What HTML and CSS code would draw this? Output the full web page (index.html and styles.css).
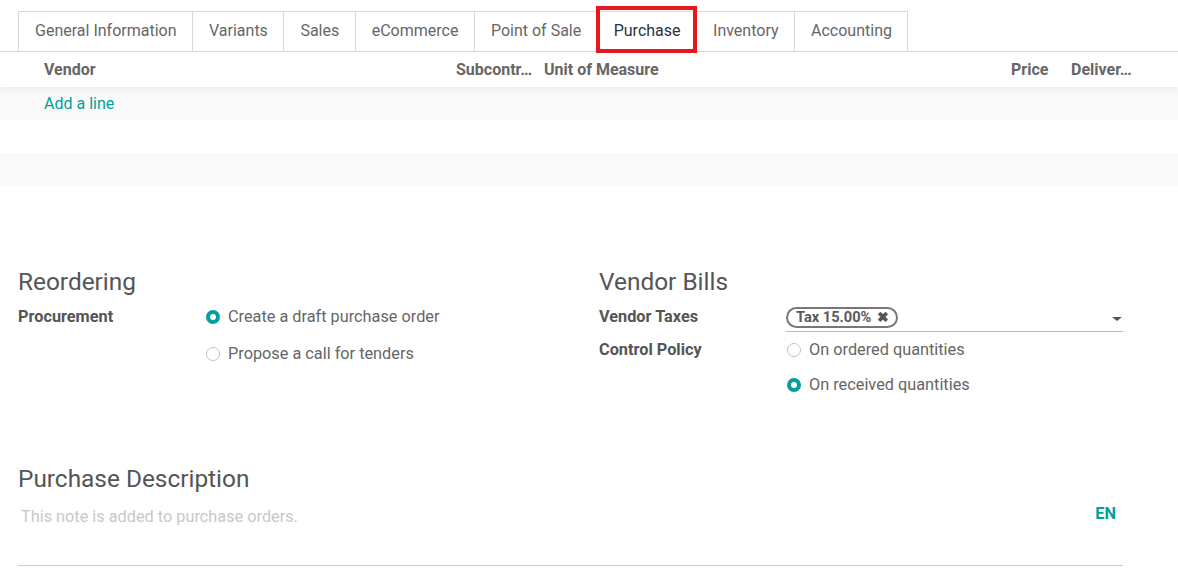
FILE: index.html
```html
<!DOCTYPE html>
<html lang="en">

<head>
  <meta charset="UTF-8" />
  <title>Product - Purchase</title>
  <link rel="stylesheet" href="styles.css">
</head>

<body>
  <!-- 标签页 -->
  <div class="tabs">
    <ul class="tab-list">
      <li>General Information</li>
      <li>Variants</li>
      <li>Sales</li>
      <li>eCommerce</li>
      <li>Point of Sale</li>
      <li class="active">Purchase<span class="mark"></span></li>
      <li>Inventory</li>
      <li>Accounting</li>
    </ul>
  </div>

  <!-- 供应商列表 -->
  <div class="vendor-table">
    <div class="row head">
      <span class="c-vendor">Vendor</span>
      <span class="c-sub">Subcontr&hellip;</span>
      <span class="c-uom">Unit of Measure</span>
      <span class="c-price">Price</span>
      <span class="c-deliv">Deliver&hellip;</span>
    </div>
    <div class="row odd"><a class="add-line">Add a line</a></div>
    <div class="row"></div>
    <div class="row odd"></div>
  </div>

  <div class="sheet">
    <div class="groups">
      <div class="group">
        <h2>Reordering</h2>
        <div class="field">
          <label>Procurement</label>
          <div class="radios">
            <div class="radio checked"><i></i>Create a draft purchase order</div>
            <div class="radio"><i></i>Propose a call for tenders</div>
          </div>
        </div>
      </div>
      <div class="group">
        <h2>Vendor Bills</h2>
        <div class="field taxes">
          <label>Vendor Taxes</label>
          <div class="many2many">
            <span class="tag">Tax 15.00% <b>&#10006;</b></span>
            <span class="caret"></span>
          </div>
        </div>
        <div class="field policy">
          <label>Control Policy</label>
          <div class="radios">
            <div class="radio"><i></i>On ordered quantities</div>
            <div class="radio checked"><i></i>On received quantities</div>
          </div>
        </div>
      </div>
    </div>

    <h2 class="desc-title">Purchase Description</h2>
    <div class="note">
      <span class="placeholder">This note is added to purchase orders.</span>
      <span class="lang">EN</span>
    </div>
  </div>
</body>

</html>
```

FILE: styles.css
```css
* {
  margin: 0;
  padding: 0;
  box-sizing: border-box;
}

ul {
  list-style: none;
}

body {
  font-family: Roboto, "Liberation Sans", sans-serif;
  font-size: 16px;
  color: #666;
  background: #fff;
}

/* 标签页 */
.tabs {
  padding: 11px 0 0 18px;
  border-bottom: 1px solid #d5d9de;
}

.tab-list {
  display: flex;
}

.tab-list li {
  position: relative;
  height: 41px;
  margin-bottom: -1px;
  padding: 0 15.5px 0 16px;
  line-height: 38px;
  color: #666;
  border: 1px solid #d5d9de;
  border-left: none;
}

.tab-list li:first-child {
  border-left: 1px solid #d5d9de;
}

.tab-list li.active {
  color: #2c3440;
  border-bottom-color: #fff;
  background: #fff;
}

.tab-list .mark {
  position: absolute;
  left: -2px;
  top: -6px;
  right: -1px;
  bottom: -2px;
  border: 4px solid #e8161f;
}

/* 供应商列表 */
.vendor-table .row {
  height: 33px;
  padding-left: 44px;
  display: flex;
  align-items: center;
}

.vendor-table .odd {
  background: #f9f9f9;
}

.vendor-table .head {
  height: 35px;
  font-weight: bold;
  position: relative;
  box-shadow: 0 3px 6px rgba(0, 0, 0, 0.05);
}

.head .c-vendor {
  width: 412px;
}

.head .c-sub {
  width: 88px;
}

.head .c-uom {
  width: 467px;
}

.head .c-price {
  width: 38px;
}

.head .c-deliv {
  margin-left: 22px;
}

.add-line {
  color: #00a09d;
  cursor: pointer;
}

/* 表单 */
.sheet {
  width: 1105px;
  margin: 0 0 0 18px;
  padding-top: 81px;
  font-size: 16.3px;
}

.groups {
  display: grid;
  grid-template-columns: 581px 1fr;
}

h2 {
  font-weight: normal;
  font-size: 24.4px;
  color: #555;
  line-height: 30px;
  margin-bottom: 5px;
}

.field {
  display: flex;
}

.field label {
  width: 187px;
  font-weight: bold;
  color: #555;
  line-height: 22px;
  padding-top: 3.5px;
}

.radios {
  display: flex;
  flex-direction: column;
}

.radio {
  display: flex;
  align-items: center;
  height: 37px;
  line-height: 22px;
  padding-bottom: 8px;
}

.radio i {
  width: 14px;
  height: 14px;
  border-radius: 50%;
  border: 1px solid #c2c2c2;
  margin: 0 8px 0 1px;
}

.radio.checked i {
  border: 4px solid #00a09d;
  background: #fff;
}

.taxes label {
  padding-top: 4px;
}

.many2many {
  flex: 1;
  height: 30px;
  padding-top: 5px;
  border-bottom: 1px solid #bbb;
  margin-bottom: 2px;
  display: flex;
  align-items: flex-start;
  justify-content: space-between;
}

.tag {
  border: 2px solid #777;
  border-radius: 11px;
  padding: 0 7px 0 8px;
  height: 21px;
  line-height: 17px;
  font-size: 14.6px;
  font-weight: bold;
  color: #5a5a5a;
}

.tag b {
  font-size: 14px;
  margin-left: 2px;
  color: #555;
}

.caret {
  margin: 10px 1px 0 0;
  border-left: 5px solid transparent;
  border-right: 5px solid transparent;
  border-top: 4px solid #555;
}

.policy label {
  padding-top: 5px;
}

.policy .radios {
  margin-top: 2px;
}

.policy .radio {
  height: 35px;
  padding-bottom: 7px;
}

.desc-title {
  margin-top: 58px;
  margin-bottom: 12px;
}

.note {
  display: flex;
  justify-content: space-between;
  align-items: flex-start;
  height: 60px;
  border-bottom: 1px solid #ccc;
}

.placeholder {
  color: #c8c8c8;
  padding-left: 3px;
  line-height: 22px;
}

.lang {
  color: #00a09d;
  font-weight: bold;
  margin: -2px 7px 0 0;
}
```
